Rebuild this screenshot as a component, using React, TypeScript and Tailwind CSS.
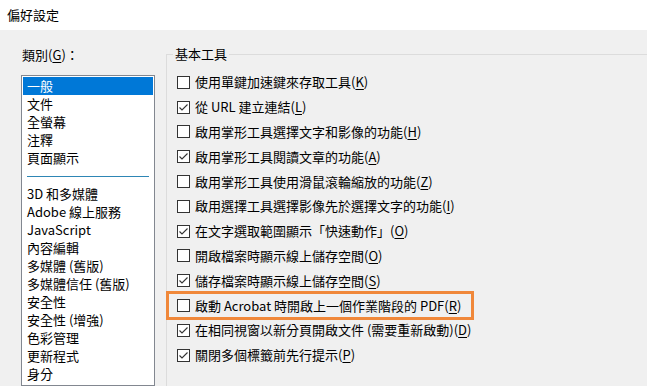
import React from "react";

const FONT = { fontFamily: '"Noto Sans CJK TC", "Noto Sans", sans-serif' };

const categories: (string | null)[] = [
  "一般",
  "文件",
  "全螢幕",
  "注釋",
  "頁面顯示",
  null,
  "3D 和多媒體",
  "Adobe 線上服務",
  "JavaScript",
  "內容編輯",
  "多媒體 (舊版)",
  "多媒體信任 (舊版)",
  "安全性",
  "安全性 (增強)",
  "色彩管理",
  "更新程式",
  "身分",
];

type Opt = { text: string; key: string; checked: boolean; highlight?: boolean };

const options: Opt[] = [
  { text: "使用單鍵加速鍵來存取工具", key: "K", checked: false },
  { text: "從 URL 建立連結", key: "L", checked: true },
  { text: "啟用掌形工具選擇文字和影像的功能", key: "H", checked: false },
  { text: "啟用掌形工具閱讀文章的功能", key: "A", checked: true },
  { text: "啟用掌形工具使用滑鼠滾輪縮放的功能", key: "Z", checked: false },
  { text: "啟用選擇工具選擇影像先於選擇文字的功能", key: "I", checked: false },
  { text: "在文字選取範圍顯示「快速動作」", key: "O", checked: true },
  { text: "開啟檔案時顯示線上儲存空間", key: "O", checked: false },
  { text: "儲存檔案時顯示線上儲存空間", key: "S", checked: true },
  { text: "啟動 Acrobat 時開啟上一個作業階段的 PDF", key: "R", checked: false, highlight: true },
  { text: "在相同視窗以新分頁開啟文件 (需要重新啟動)", key: "D", checked: true },
  { text: "關閉多個標籤前先行提示", key: "P", checked: true },
];

function Checkbox({ checked }: { checked: boolean }) {
  return (
    <span className="w-[13px] h-[13px] shrink-0 border border-[#333333] bg-white flex items-center justify-center">
      {checked && (
        <svg width="11" height="11" viewBox="0 0 11 11">
          <polyline points="1.5,5.5 4,8 9.5,2.5" fill="none" stroke="#333333" strokeWidth="1.1" />
        </svg>
      )}
    </span>
  );
}

export default function App() {
  return (
    <div className="w-[647px] h-[386px] overflow-hidden bg-[#f0f0f0] flex flex-col text-black" style={FONT}>
      <div className="h-[30px] shrink-0 bg-white flex items-center pl-[7px] text-[13px]">偏好設定</div>
      <div className="flex flex-1 min-h-0">
        {/* Left column */}
        <div className="ml-[21px] w-[134px] shrink-0 flex flex-col pt-[16px]">
          <div className="h-[18px] leading-[18px] text-[13px] pl-[1px]">
            類別(<span className="underline underline-offset-2">G</span>)：
          </div>
          <div className="mt-[11px] border border-[#828790] bg-white p-[1px] h-[340px] flex flex-col">
            {categories.map((c, i) =>
              c === null ? (
                <div key={i} className="h-[18px] flex items-center px-[4px]">
                  <div className="h-px w-full bg-[#2e86b5]" />
                </div>
              ) : (
                <div
                  key={i}
                  className={
                    "h-[18px] leading-[18px] text-[13px] pl-[4px] whitespace-nowrap " +
                    (i === 0 ? "bg-[#0078d7] text-white" : "")
                  }
                >
                  {c}
                </div>
              )
            )}
          </div>
        </div>

        {/* Right group box */}
        <div className="ml-[11px] flex-1 pt-[24px]">
          <div className="relative border-l border-t border-[#dcdcdc] h-[400px] pl-[10px] pt-[15px]">
            <span className="absolute left-[6px] -top-[10px] bg-[#f0f0f0] px-[2px] text-[13px] leading-[18px]">
              基本工具
            </span>
            <div className="flex flex-col">
              {options.map((o, i) => (
                <div key={i} className="relative h-[24.8px] flex items-center gap-[5px] text-[13px] whitespace-nowrap">
                  {o.highlight && (
                    <div className="absolute -left-[11px] top-[-2px] w-[308px] h-[29px] border-[3px] border-[#f0883a]" />
                  )}
                  <Checkbox checked={o.checked} />
                  <span className="leading-[18px]">
                    {o.text}(<span className="underline underline-offset-2">{o.key}</span>)
                  </span>
                </div>
              ))}
            </div>
          </div>
        </div>
      </div>
    </div>
  );
}
